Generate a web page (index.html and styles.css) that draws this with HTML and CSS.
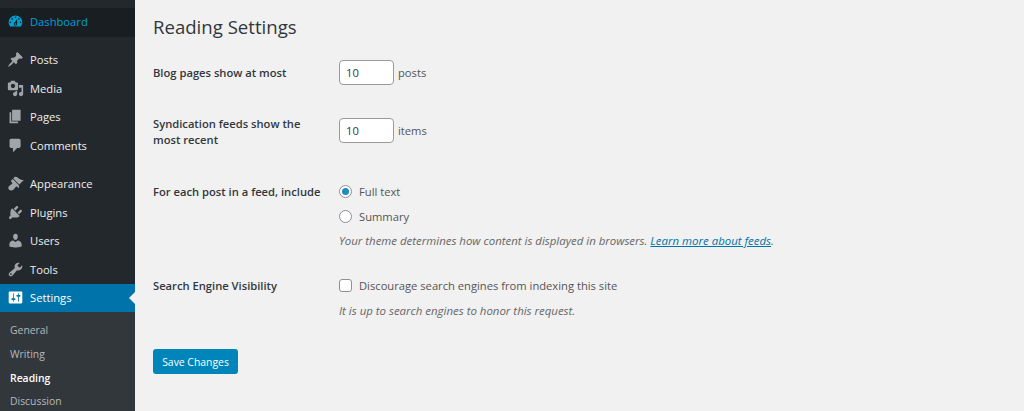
FILE: index.html
```html
<!DOCTYPE html>
<html lang="en">
<head>
  <meta charset="UTF-8" />
  <title>Reading Settings</title>
  <link rel="stylesheet" href="styles.css">
</head>
<body>
  <div class="sidebar">
    <a class="menu-item dash"><svg viewBox="0 0 20 20"><path d="M3.76 16h12.48c1.1-1.37 1.76-3.11 1.76-5 0-4.42-3.58-8-8-8s-8 3.58-8 8c0 1.89.66 3.63 1.76 5zM10 4c.55 0 1 .45 1 1s-.45 1-1 1-1-.45-1-1 .45-1 1-1zM6 6c.55 0 1 .45 1 1s-.45 1-1 1-1-.45-1-1 .45-1 1-1zm8 0c.55 0 1 .45 1 1s-.45 1-1 1-1-.45-1-1 .45-1 1-1zm-5.37 5.55L12 7v6c0 1.1-.9 2-2 2s-2-.9-2-2c0-.57.24-1.08.63-1.45zM4 10c.55 0 1 .45 1 1s-.45 1-1 1-1-.45-1-1 .45-1 1-1zm12 0c.55 0 1 .45 1 1s-.45 1-1 1-1-.45-1-1 .45-1 1-1zm-5 3c0-.55-.45-1-1-1s-1 .45-1 1 .45 1 1 1 1-.45 1-1z"/></svg>Dashboard</a>

    <div class="menu-group">
      <a class="menu-item"><svg viewBox="0 0 20 20"><path d="M10.44 3.02l1.82-1.82 6.36 6.35-1.83 1.82c-1.05-.68-2.48-.57-3.41.36l-.75.75c-.92.93-1.04 2.35-.35 3.41l-1.83 1.82-2.41-2.41-2.8 2.79c-.42.42-3.38 2.71-3.8 2.29s1.86-3.39 2.28-3.81l2.79-2.79L4.1 9.36l1.83-1.82c1.05.69 2.48.57 3.4-.36l.75-.75c.93-.92 1.05-2.35.36-3.41z"/></svg>Posts</a>
      <a class="menu-item"><svg viewBox="0 0 20 20"><path d="M13 11V4c0-.55-.45-1-1-1h-1.67L9 1H5L3.67 3H2c-.55 0-1 .45-1 1v7c0 .55.45 1 1 1h10c.55 0 1-.45 1-1zM7 4.5c1.38 0 2.5 1.12 2.5 2.5S8.38 9.5 7 9.5 4.5 8.38 4.5 7 5.62 4.5 7 4.5zM14 6h5v10.5c0 1.38-1.12 2.5-2.5 2.5S14 17.88 14 16.5s1.12-2.5 2.5-2.5c.17 0 .34.02.5.05V9h-3V6zm-4 8.05V13h2v3.5c0 1.38-1.12 2.5-2.5 2.5S7 17.88 7 16.5 8.12 14 9.5 14c.17 0 .34.02.5.05z"/></svg>Media</a>
      <a class="menu-item"><svg viewBox="0 0 20 20"><path d="M6 15V2h10v13H6zm-1 1h8v2H3V5h2v11z"/></svg>Pages</a>
      <a class="menu-item"><svg viewBox="0 0 20 20"><path d="M5 2h9c1.1 0 2 .9 2 2v7c0 1.1-.9 2-2 2h-2l-5 5v-5H5c-1.1 0-2-.9-2-2V4c0-1.1.9-2 2-2z"/></svg>Comments</a>
    </div>

    <div class="menu-group second">
      <a class="menu-item"><svg viewBox="0 0 20 20"><path d="M14.48 11.06L7.41 3.99l1.5-1.5c.5-.56 2.3-.47 3.51.32 1.21.8 1.43 1.28 2.91 2.1 1.18.64 2.45 1.26 4.45.85zm-.71.71L6.7 4.7 4.93 6.47c-.39.39-.39 1.02 0 1.41l1.06 1.06c.39.39.39 1.03 0 1.42-.6.6-1.43 1.11-2.21 1.69-.35.26-.7.53-1.01.84C1.43 13.23.99 15.74 2.5 17.25s4.02 1.08 5.36-.28c.31-.31.58-.66.84-1.01.58-.78 1.09-1.61 1.69-2.21.39-.39 1.02-.39 1.41 0l1.06 1.06c.39.39 1.02.39 1.41 0z"/></svg>Appearance</a>
      <a class="menu-item"><svg viewBox="0 0 20 20"><path d="M13.11 4.36L9.87 7.6 8 5.73l3.24-3.24c.35-.34 1.05-.2 1.56.32.52.51.66 1.21.31 1.55zm-8 1.77l.91-1.12 9.01 9.01-1.19.84c-.71.71-2.63 1.16-3.82 1.16H6.14L4.9 17.26c-.59.59-1.54.59-2.12 0-.59-.58-.59-1.53 0-2.12l1.24-1.24v-3.88c0-1.13.4-3.19 1.09-3.89zm7.26 3.97l3.24-3.24c.34-.35 1.04-.21 1.55.31.52.51.66 1.21.31 1.55l-3.24 3.25z"/></svg>Plugins</a>
      <a class="menu-item"><svg viewBox="0 0 20 20"><path d="M10 9.25c-2.27 0-2.73-3.44-2.73-3.44C7 4.02 7.82 2 9.97 2c2.16 0 2.98 2.02 2.71 3.81 0 0-.41 3.44-2.68 3.44zm0 2.57L12.72 10c2.39 0 4.52 2.33 4.52 4.53v2.49s-3.65 1.13-7.24 1.13c-3.65 0-7.24-1.13-7.24-1.13v-2.49c0-2.25 1.94-4.48 4.47-4.48z"/></svg>Users</a>
      <a class="menu-item"><svg viewBox="0 0 20 20"><path d="M16.68 9.77c-1.34 1.34-3.3 1.67-4.95.99l-5.41 6.52c-.99.99-2.59.99-3.58 0s-.99-2.59 0-3.57l6.52-5.42c-.68-1.65-.35-3.61.99-4.95 1.28-1.28 3.12-1.62 4.72-1.06l-2.89 2.89 2.82 2.82 2.86-2.87c.53 1.58.18 3.39-1.08 4.65zM3.81 16.21c.4.39 1.04.39 1.43 0 .4-.4.4-1.04 0-1.43-.39-.4-1.03-.4-1.43 0-.39.39-.39 1.03 0 1.43z"/></svg>Tools</a>
      <a class="menu-item current"><svg viewBox="0 0 20 20"><path d="M18 16V4c0-.55-.45-1-1-1H3c-.55 0-1 .45-1 1v12c0 .55.45 1 1 1h14c.55 0 1-.45 1-1zM8 11h1c.55 0 1 .45 1 1s-.45 1-1 1H8v1.5c0 .28-.22.5-.5.5s-.5-.22-.5-.5V13H6c-.55 0-1-.45-1-1s.45-1 1-1h1V5.5c0-.28.22-.5.5-.5s.5.22.5.5V11zm5-2h-1c-.55 0-1-.45-1-1s.45-1 1-1h1V5.5c0-.28.22-.5.5-.5s.5.22.5.5V7h1c.55 0 1 .45 1 1s-.45 1-1 1h-1v5.5c0 .28-.22.5-.5.5s-.5-.22-.5-.5V9z"/></svg>Settings</a>
    </div>

    <div class="submenu">
      <a>General</a>
      <a>Writing</a>
      <a class="active">Reading</a>
      <a>Discussion</a>
    </div>
  </div>

  <div class="content">
    <h1>Reading Settings</h1>
    <form>
      <div class="row row-posts">
        <label class="row-label">Blog pages show at most</label>
        <div class="inline"><input class="num" type="text" value="10"> posts</div>
      </div>
      <div class="row row-feeds">
        <label class="row-label">Syndication feeds show the most recent</label>
        <div class="inline"><input class="num" type="text" value="10"> items</div>
      </div>
      <div class="row row-include">
        <label class="row-label">For each post in a feed, include</label>
        <div>
          <label class="choice"><input type="radio" name="feed" checked> Full text</label>
          <label class="choice"><input type="radio" name="feed"> Summary</label>
          <p class="hint">Your theme determines how content is displayed in browsers. <a href="#">Learn more about feeds</a>.</p>
        </div>
      </div>
      <div class="row row-search">
        <label class="row-label">Search Engine Visibility</label>
        <div>
          <label class="choice"><input type="checkbox"> Discourage search engines from indexing this site</label>
          <p class="hint">It is up to search engines to honor this request.</p>
        </div>
      </div>
      <button type="button" class="save">Save Changes</button>
    </form>
  </div>
</body>
</html>
```

FILE: styles.css
```css
html, body {
  height: 411px;
  overflow: hidden;
}

body {
  margin: 0;
  display: flex;
  background: #f1f1f1;
  color: #555;
  font-family: "Open Sans", "Noto Sans", sans-serif;
  font-size: 11.2px;
}

.sidebar {
  width: 135px;
  flex-shrink: 0;
  height: 411px;
  overflow: hidden;
  background: #23282d;
  padding-top: 8px;
  box-sizing: border-box;
}

.menu-group {
  margin-top: 9px;
}

.second {
  margin-top: 10px;
}

.menu-item {
  display: flex;
  align-items: center;
  height: 28.5px;
  padding-left: 7px;
  color: #eee;
  position: relative;
}

.menu-item svg {
  width: 17px;
  height: 17px;
  margin-right: 6px;
  fill: #a0a5aa;
}

.dash {
  background: #191e23;
  color: #00a0d2;
  line-height: 28px;
  align-items: flex-start;
}

.dash svg {
  fill: #00a0d2;
  margin-top: 5px;
}

.current {
  background: #0073aa;
  color: #fff;
}

.current svg {
  fill: #fff;
}

.current::after {
  content: "";
  position: absolute;
  right: 0;
  top: 8px;
  border: 6px solid transparent;
  border-right-color: #f1f1f1;
  border-left: 0;
}

.submenu {
  background: #32373c;
  padding-top: 7px;
  height: 100px;
}

.submenu a {
  display: block;
  height: 23.8px;
  line-height: 23.8px;
  padding-left: 10px;
  color: #b4b9be;
  font-size: 10.4px;
}

.submenu .active {
  color: #fff;
  font-weight: 600;
}

.content {
  flex: 1;
  padding-left: 18px;
}

h1 {
  margin: 0;
  padding-top: 15px;
  height: 25px;
  line-height: 24px;
  font-size: 18.6px;
  font-weight: 400;
  color: #32373c;
}

.row {
  display: grid;
  grid-template-columns: 186px 1fr;
}

.row-posts {
  margin-top: 20px;
  height: 58px;
}

.row-feeds {
  height: 61px;
}

.row-include {
  height: 94px;
}

.row-search {
  height: 76px;
}

.row-label {
  font-weight: 600;
  color: #32373c;
  line-height: 16px;
  padding-top: 5px;
  width: 172px;
}

.row-feeds .row-label {
  padding-top: 0;
  margin-top: -2px;
}

.inline {
  display: flex;
  align-items: flex-start;
  gap: 4px;
  line-height: 25px;
}

.num {
  width: 55px;
  height: 25px;
  box-sizing: border-box;
  border: 1px solid #9a9a9a;
  border-radius: 4px;
  background: #fff;
  padding: 0 6px;
  font: inherit;
  color: #32373c;
}

.choice {
  display: flex;
  align-items: center;
  gap: 7px;
  height: 25px;
}

.choice input {
  appearance: none;
  margin: 0;
  width: 13px;
  height: 13px;
  box-sizing: border-box;
  border: 1px solid #8c8f94;
  background: #fff;
  position: relative;
}

.choice input[type="radio"] {
  border-radius: 50%;
}

.choice input[type="radio"]:checked::before {
  content: "";
  position: absolute;
  left: 2px;
  top: 2px;
  width: 7px;
  height: 7px;
  border-radius: 50%;
  background: #1e8cbe;
}

.choice input[type="checkbox"] {
  border-radius: 3px;
}

.hint {
  margin: 3px 0 0;
  font-style: italic;
  font-size: 11.45px;
  line-height: 18px;
  color: #666;
}

.hint a {
  color: #0073aa;
}

.row-search .hint {
  margin-top: 4px;
}

.save {
  height: 25px;
  width: 85px;
  padding: 0;
  border: none;
  border-radius: 3px;
  background: #0085ba;
  color: #fff;
  font: inherit;
  font-size: 10.4px;
}
```
